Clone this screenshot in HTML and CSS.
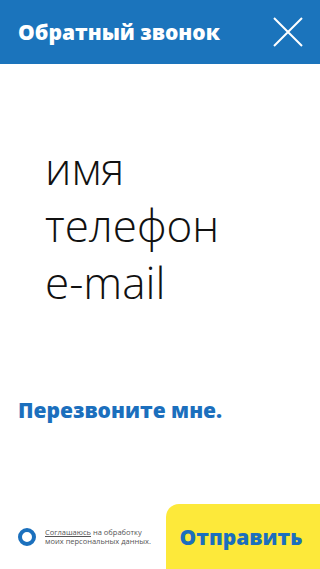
FILE: index.html
```html
<!DOCTYPE html>
<html lang="ru">
<head>
<meta charset="utf-8">
<meta name="viewport" content="width=device-width, initial-scale=1">
<link rel="stylesheet" href="styles.css">
</head>
<body>
<div class="page">
  <header class="header">
    <h1 class="title">Обратный звонок</h1>
    <button class="close" aria-label="Закрыть">
      <svg width="30" height="30" viewBox="0 0 30 30"><path d="M1 1 L29 29 M29 1 L1 29" stroke="#fff" stroke-width="2" fill="none"/></svg>
    </button>
  </header>
  <main class="form">
    <input class="field" type="text" placeholder="имя">
    <input class="field" type="tel" placeholder="телефон">
    <input class="field" type="email" placeholder="e-mail">
    <p class="callme">Перезвоните мне.</p>
  </main>
  <footer class="footer">
    <label class="agree">
      <span class="radio"></span>
      <span class="agree-text"><u>Соглашаюсь</u> на обработку<br>моих персональных данных.</span>
    </label>
    <button class="send">Отправить</button>
  </footer>
</div>
</body>
</html>
```
FILE: styles.css
```css
* { box-sizing: border-box; }
html, body { margin: 0; padding: 0; }
body {
  font-family: "Open Sans", "DejaVu Sans", sans-serif;
  background: #fff;
  color: #111;
}
.page {
  display: flex;
  flex-direction: column;
  min-height: 100vh;
}
.header {
  height: 64px;
  background: #1b74bc;
  display: flex;
  align-items: center;
  justify-content: space-between;
  padding: 0 17px 0 18px;
}
.title {
  margin: 0;
  color: #fff;
  font-size: 21px;
  font-weight: 800;
  line-height: 1;
}
.close {
  background: none;
  border: 0;
  padding: 0;
  width: 30px;
  height: 30px;
  display: block;
}
.close svg { display: block; }
.form {
  display: flex;
  flex-direction: column;
  padding: 76px 0 0 0;
}
.field {
  display: block;
  border: 0;
  outline: 0;
  background: transparent;
  font-family: "Open Sans", sans-serif;
  font-weight: 300;
  font-size: 44px;
  line-height: 57px;
  height: 57px;
  padding: 0 0 0 45px;
  margin: 0;
  color: #111;
  width: 100%;
}
.field::placeholder { color: #111; opacity: 1; }
.callme {
  margin: 87px 0 0 0;
  padding-left: 18px;
  color: #1b6fbd;
  font-weight: 800;
  font-size: 21px;
  line-height: 24px;
}
.footer {
  margin-top: auto;
  display: flex;
  align-items: stretch;
  justify-content: space-between;
  height: 65px;
}
.agree {
  display: flex;
  align-items: center;
  gap: 9px;
  padding-left: 18px;
}
.radio {
  width: 18px;
  height: 18px;
  border: 4px solid #1b70bd;
  border-radius: 50%;
  flex: none;
}
.agree-text {
  font-size: 7.5px;
  line-height: 9px;
  color: #555;
}
.agree-text u { text-decoration-thickness: 0.5px; }
.send {
  width: 154px;
  border: 0;
  background: #fde93a;
  border-top-left-radius: 13px;
  color: #1b6fbd;
  font-family: "Open Sans", sans-serif;
  font-weight: 800;
  font-size: 21px;
  padding: 0 4px 0 0;
}
```
